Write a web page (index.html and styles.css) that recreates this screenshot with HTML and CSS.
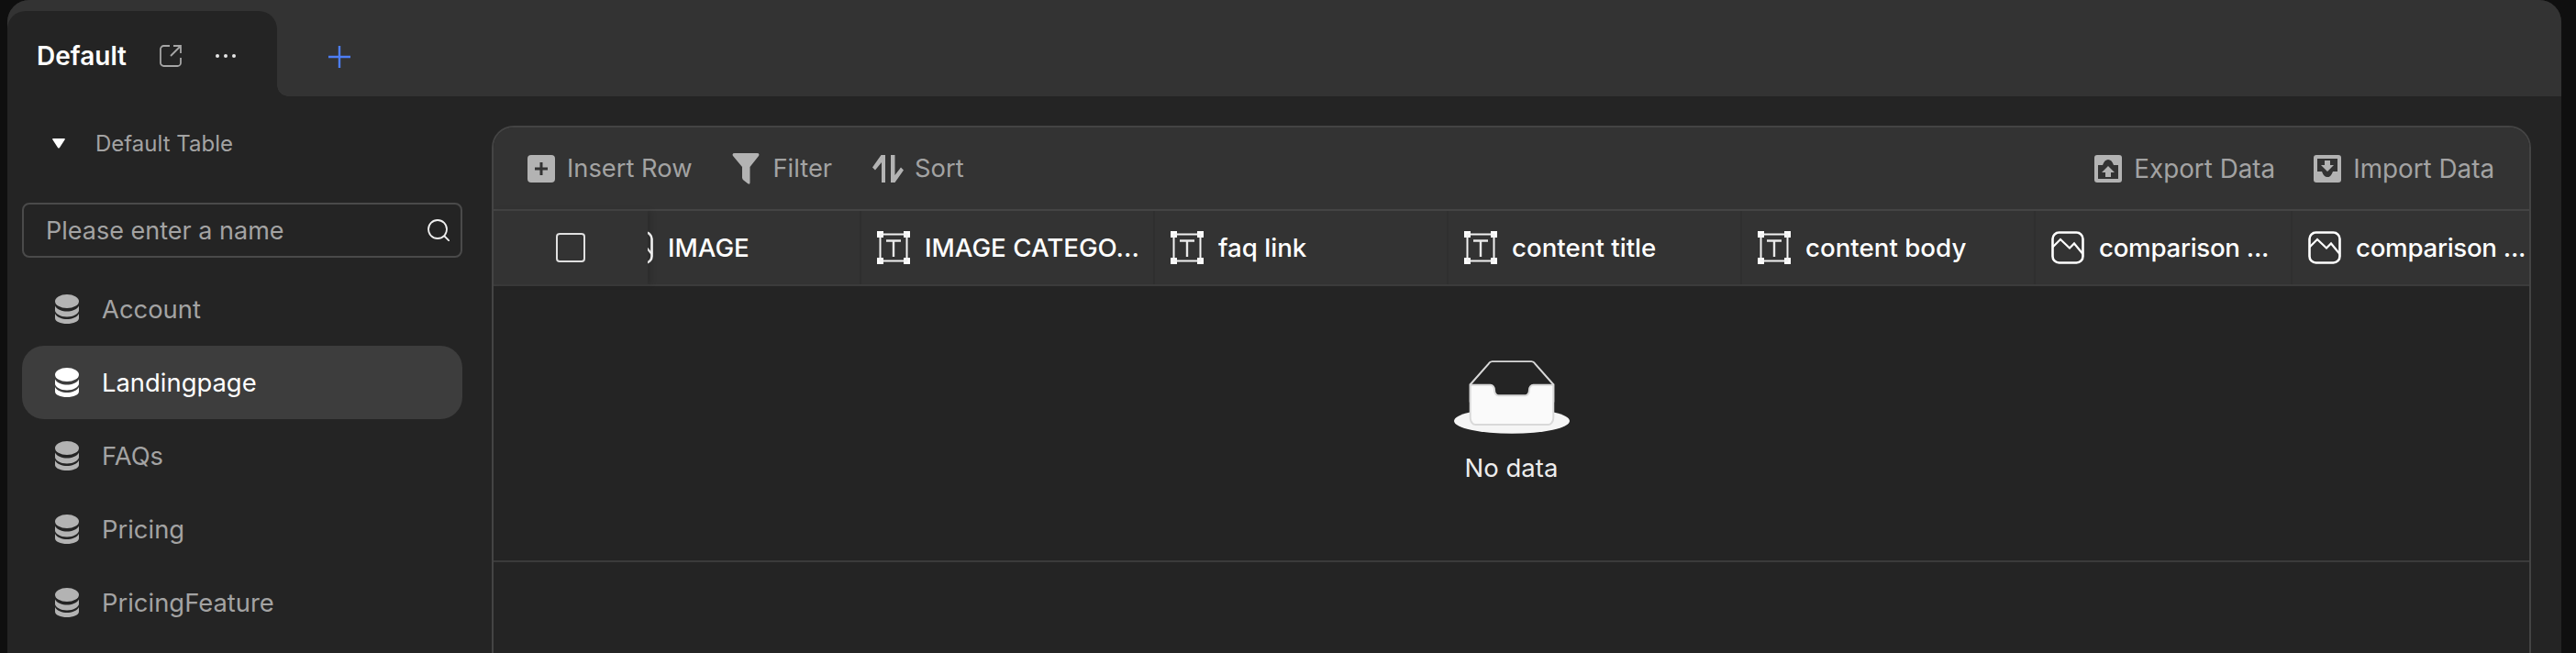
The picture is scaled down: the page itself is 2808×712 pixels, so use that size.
FILE: index.html
```html
<!DOCTYPE html>
<html lang="en">
<head>
<meta charset="utf-8">
<title>Default Table</title>
<link rel="stylesheet" href="styles.css">
</head>
<body>
<svg class="defs" width="0" height="0" aria-hidden="true">
  <symbol id="i-db" viewBox="0 0 26 32">
    <ellipse cx="13" cy="7.5" rx="13" ry="7.5" fill="currentColor"/>
    <path fill="currentColor" d="M0 12.5C2 16.5 8 18.5 13 18.5S24 16.5 26 12.5V17.5C26 21 20 24.5 13 24.5S0 21 0 17.5Z"/>
    <path fill="currentColor" d="M0 21C2 25 8 27 13 27S24 25 26 21V26C26 29.5 20 32 13 32S0 29.5 0 26Z"/>
  </symbol>
  <symbol id="i-text" viewBox="0 0 36 36">
    <g fill="#fff">
      <rect x="0" y="0" width="7" height="7"/><rect x="29" y="0" width="7" height="7"/>
      <rect x="0" y="29" width="7" height="7"/><rect x="29" y="29" width="7" height="7"/>
    </g>
    <path d="M3.500 3.500H32.500V32.500H3.500Z" fill="none" stroke="#f2f2f2" stroke-width="2"/>
    <path d="M10 10.500H26M18 10.500V28" fill="none" stroke="#e8e8e8" stroke-width="2.400"/>
  </symbol>
  <symbol id="i-image" viewBox="0 0 36 36">
    <rect x="1.500" y="1.500" width="33" height="33" rx="7" fill="none" stroke="#fff" stroke-width="2.600"/>
    <path d="M1.500 17.500L10 9L20 18.500L25 13.500L34.500 25" fill="none" stroke="#fff" stroke-width="2.200"/>
  </symbol>
</svg>
<div class="shell">
  <header class="topbar">
    <div class="tab">
      <span class="tab-title">Default</span>
      <svg class="ic-ext" width="24" height="24" viewBox="0 0 24 24"><path d="M11 1H4.500A3.500 3.500 0 0 0 1 4.500V19.500A3.500 3.500 0 0 0 4.500 23H19.500A3.500 3.500 0 0 0 23 19.500V14M12 12L23 1M15 1H23V9" fill="none" stroke="#a6a6a6" stroke-width="1.800"/></svg>
      <svg class="ic-dots" width="24" height="6" viewBox="0 0 24 6"><g fill="#e6e6e6"><circle cx="3" cy="3" r="2"/><circle cx="12" cy="3" r="2"/><circle cx="21" cy="3" r="2"/></g></svg>
    </div>
    <svg class="ic-plus" width="24" height="24" viewBox="0 0 24 24"><path d="M12 0V24M0 12H24" stroke="#4d7ef5" stroke-width="2.400"/></svg>
  </header>
  <div class="content">
    <aside class="sidebar">
      <div class="group">
        <svg class="ic-caret" width="14" height="11" viewBox="0 0 14 11"><path d="M1 0H13Q14.500 0 13.500 1.500L8 10Q7 11 6 10L0.500 1.500Q-0.500 0 1 0Z" fill="#fff"/></svg>
        <span class="group-name">Default Table</span>
      </div>
      <div class="search">
        <span class="search-text">Please enter a name</span>
        <svg class="ic-search" width="24" height="24" viewBox="0 0 24 24"><circle cx="11" cy="11" r="10" fill="none" stroke="#f0f0f0" stroke-width="1.800"/><path d="M18 18L24 24" stroke="#f0f0f0" stroke-width="1.800"/></svg>
      </div>
      <ul class="tables">
        <li class="table-item"><svg class="ic-db"><use href="#i-db"/></svg><span>Account</span></li>
        <li class="table-item active"><svg class="ic-db"><use href="#i-db"/></svg><span>Landingpage</span></li>
        <li class="table-item"><svg class="ic-db"><use href="#i-db"/></svg><span>FAQs</span></li>
        <li class="table-item"><svg class="ic-db"><use href="#i-db"/></svg><span>Pricing</span></li>
        <li class="table-item"><svg class="ic-db"><use href="#i-db"/></svg><span>PricingFeature</span></li>
      </ul>
    </aside>
    <main class="panel">
      <div class="toolbar">
        <div class="tools tools-left">
          <div class="tool tool-insert">
            <svg width="30" height="30" viewBox="0 0 30 30"><rect width="30" height="30" rx="4" fill="#b3b3b3"/><path d="M15 8V22M8 15H22" stroke="#333" stroke-width="3"/></svg>
            <span>Insert Row</span>
          </div>
          <div class="tool">
            <svg width="30" height="34" viewBox="0 0 30 34"><path d="M1 3Q-0.500 0 3 0H27Q30.500 0 29 3L19.500 15V32Q19.500 35 17 33L12.500 29.500Q11 28.500 11 26.500V15Z" fill="#b3b3b3"/></svg>
            <span>Filter</span>
          </div>
          <div class="tool tool-sort">
            <svg width="34" height="30" viewBox="0 0 34 30"><path d="M9.500 0H14V30H10V8L3 16.500L0 13.500Z" fill="#b3b3b3"/><path d="M20 0H24.500V22L31 13.500L34 16.500L24.500 30H20Z" fill="#b3b3b3"/></svg>
            <span>Sort</span>
          </div>
        </div>
        <div class="tools tools-right">
          <div class="tool">
            <svg width="30" height="30" viewBox="0 0 30 30"><rect width="30" height="30" rx="3" fill="#b3b3b3"/><path d="M4 26H26V11H21Q19 5 15 5Q11 5 9 11H4Z" fill="#333"/><path d="M12 24H18V19H22L15 12L8 19H12Z" fill="#b3b3b3"/></svg>
            <span>Export Data</span>
          </div>
          <div class="tool">
            <svg width="30" height="30" viewBox="0 0 30 30"><rect width="30" height="30" rx="3" fill="#b3b3b3"/><path d="M4 4H26V18H21Q19 24 15 24Q11 24 9 18H4Z" fill="#333"/><path d="M12 6H18V11H22L15 18L8 11H12Z" fill="#b3b3b3"/></svg>
            <span>Import Data</span>
          </div>
        </div>
      </div>
      <div class="thead">
        <div class="check-col"><span class="checkbox"></span></div>
        <div class="columns">
          <div class="col col-first col-narrow"><svg class="ic-col"><use href="#i-image"/></svg><span>IMAGE</span></div>
          <div class="col"><svg class="ic-col"><use href="#i-text"/></svg><span>IMAGE CATEGO...</span></div>
          <div class="col"><svg class="ic-col"><use href="#i-text"/></svg><span>faq link</span></div>
          <div class="col"><svg class="ic-col"><use href="#i-text"/></svg><span>content title</span></div>
          <div class="col"><svg class="ic-col"><use href="#i-text"/></svg><span>content body</span></div>
          <div class="col col-narrow"><svg class="ic-col"><use href="#i-image"/></svg><span class="truncated">comparison ...</span></div>
          <div class="col col-narrow"><svg class="ic-col"><use href="#i-image"/></svg><span class="truncated">comparison ...</span></div>
        </div>
      </div>
      <div class="empty-row">
        <div class="empty">
          <svg class="empty-art" width="126" height="81" viewBox="0 0 64 41">
            <g transform="translate(0 1)" fill="none" fill-rule="evenodd">
              <ellipse fill="#f5f5f5" cx="32" cy="33" rx="32" ry="7"/>
              <g fill-rule="nonzero" stroke="#d9d9d9">
                <path d="M55 12.760L44.854 1.258C44.367.474 43.656 0 42.907 0H21.093c-.749 0-1.460.474-1.947 1.257L9 12.761V22h46v-9.240z"/>
                <path d="M41.613 15.931c0-1.605.994-2.930 2.227-2.931H55v18.137C55 33.260 53.680 35 52.050 35h-40.100C10.320 35 9 33.259 9 31.137V13h11.160c1.233 0 2.227 1.323 2.227 2.928v.022c0 1.605 1.005 2.901 2.237 2.901h14.752c1.232 0 2.237-1.308 2.237-2.913v-.007z" fill="#fafafa"/>
              </g>
            </g>
          </svg>
          <div class="empty-text">No data</div>
        </div>
      </div>
    </main>
  </div>
</div>
</body>
</html>
```

FILE: styles.css
```css
* { box-sizing: border-box; }
html, body {
  margin: 0;
  height: 712px;
  overflow: hidden;
  background: #0f0f0f;
  font-family: Inter, "Noto Sans", sans-serif;
}
.defs { display: block; height: 0; }
.shell {
  width: 2784px;
  height: 712px;
  margin: 0 8px;
  background: #242424;
  border-radius: 24px 24px 0 0;
  overflow: hidden;
}
.topbar {
  height: 105px;
  padding-top: 12px;
  background: #333;
  display: flex;
  align-items: flex-start;
}
.tab {
  position: relative;
  width: 294px;
  height: 93px;
  padding: 5px 0 0 32px;
  background: #242424;
  border-radius: 20px 20px 0 0;
  display: flex;
  align-items: center;
}
.tab::after {
  content: "";
  position: absolute;
  left: 100%;
  bottom: 0;
  width: 12px;
  height: 12px;
  background: radial-gradient(circle at 100% 0, transparent 11.500px, #242424 12px);
}
.tab-title {
  font-size: 28px;
  font-weight: 600;
  color: #fff;
  width: 134px;
}
.ic-dots { margin-left: 36px; }
.ic-plus { margin: 38px 0 0 56px; }
.content { display: flex; align-items: flex-start; }
.sidebar {
  width: 528px;
  padding: 0 32px 0 16px;
  flex: none;
}
.group {
  height: 116px;
  display: flex;
  align-items: center;
  padding: 0 0 14px 33px;
}
.ic-caret { margin-right: 33px; flex: none; }
.group-name { font-size: 24px; color: #a3a3a3; }
.search {
  width: 480px;
  height: 60px;
  border: 2px solid #4a4a4a;
  border-radius: 8px;
  padding: 0 12px 0 24px;
  display: flex;
  align-items: center;
  justify-content: space-between;
  font-size: 27px;
  color: #a3a3a3;
}
.tables { list-style: none; margin: 16px 0 0; padding: 0; }
.table-item {
  height: 80px;
  padding-left: 36px;
  border-radius: 24px;
  display: flex;
  align-items: center;
  gap: 25px;
  font-size: 27.400px;
  color: #a3a3a3;
}
.table-item.active { background: #3d3d3d; color: #fff; }
.ic-db { width: 26px; height: 32px; flex: none; color: #b3b3b3; }
.active .ic-db { color: #fff; }
.panel {
  width: 2223px;
  height: 620px;
  margin: 32px 0 0 0;
  border: 2px solid #444;
  border-bottom: 0;
  border-radius: 24px 24px 0 0;
  overflow: hidden;
}
.toolbar {
  height: 91px;
  background: #333;
  border-bottom: 2px solid #444;
  padding: 0 38px 0 37px;
  display: flex;
  justify-content: space-between;
  align-items: center;
}
.tools { display: flex; }
.tools-left { gap: 44px; }
.tools-right { gap: 42px; }
.tool {
  display: flex;
  align-items: center;
  gap: 14px;
  color: #a3a3a3;
}
.tools-left .tool { font-size: 27.300px; }
.tools-right .tool { font-size: 27.800px; gap: 13px; }
.tool-insert { gap: 13px; }
.tools-left .tool-sort { gap: 12px; }
.thead {
  display: flex;
  height: 82px;
  background: #333;
  border-bottom: 2px solid #3b3b3b;
}
.check-col {
  flex: none;
  width: 168px;
  position: relative;
  z-index: 1;
  background: #333;
  box-shadow: 4px 0 6px rgba(0, 0, 0, .14);
  display: flex;
  align-items: center;
  justify-content: center;
}
.checkbox {
  width: 32px;
  height: 32px;
  border: 2px solid #e0e0e0;
  border-radius: 4px;
}
.columns { display: flex; overflow: hidden; flex: 1; min-width: 0; }
.col {
  flex: none;
  width: 320px;
  padding-left: 17px;
  border-right: 2px solid #2f2f2f;
  display: flex;
  align-items: center;
  gap: 16px;
  font-size: 27.700px;
  font-weight: 500;
  color: #fff;
  white-space: nowrap;
}
.col-narrow { width: 280px; }
.col-first { margin-left: -47px; }
.truncated { letter-spacing: -.3px; }
.ic-col { width: 36px; height: 36px; flex: none; }
.empty-row {
  height: 301px;
  border-bottom: 2px solid #3b3b3b;
  display: flex;
  justify-content: center;
  padding-top: 80px;
}
.empty { display: flex; flex-direction: column; align-items: center; }
.empty-art { display: block; }
.empty-text { margin-top: 20px; font-size: 27.500px; color: #ededed; }
```
